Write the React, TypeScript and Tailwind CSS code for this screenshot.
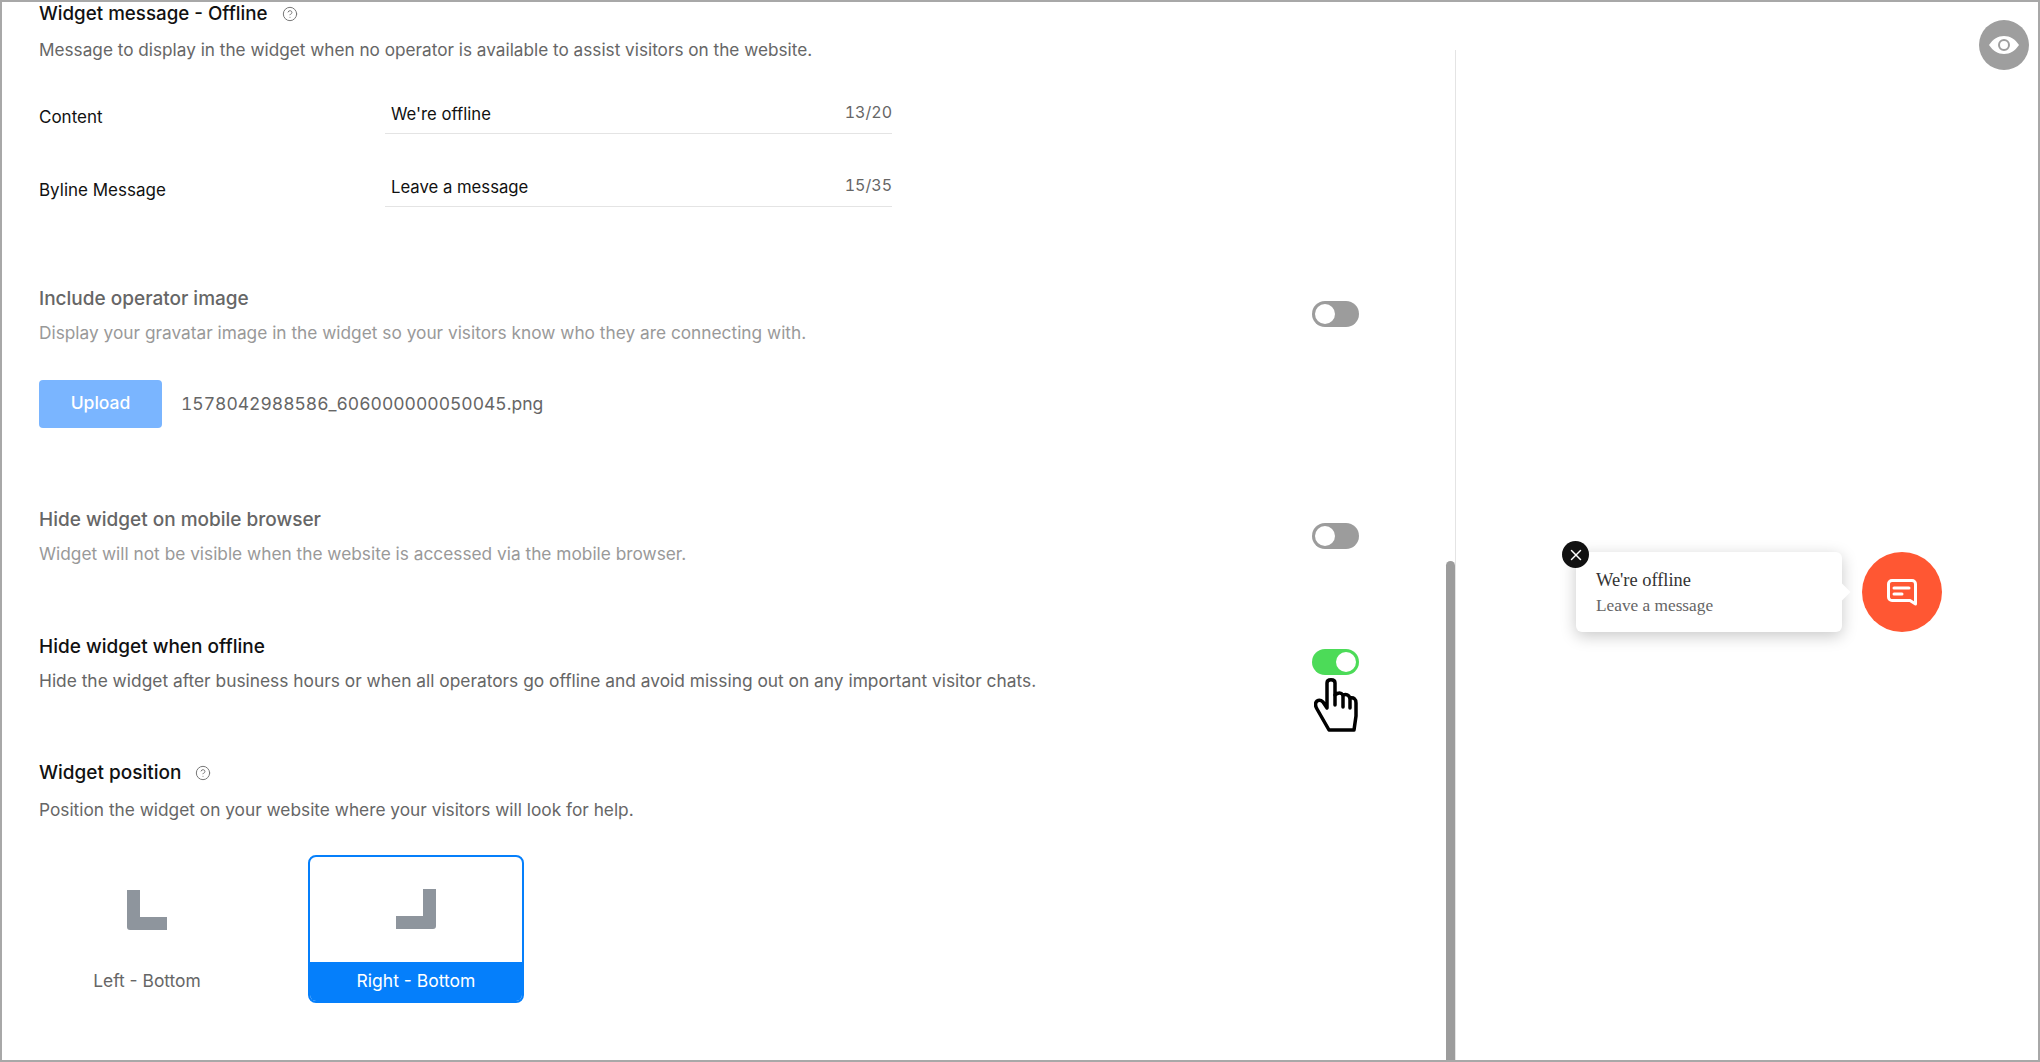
import React from 'react';
import { CircleHelp, X } from 'lucide-react';

const FONT = 'font-["Inter",sans-serif]';

const Toggle: React.FC<{ on?: boolean; className?: string }> = ({ on, className }) => (
  <div
    className={`flex h-[26px] w-[47px] shrink-0 items-center rounded-full px-[3px] ${
      on ? 'justify-end bg-[#4cdb58]' : 'justify-start bg-[#9c9c9c]'
    } ${className ?? ''}`}
  >
    <div className="h-[20px] w-[20px] rounded-full bg-white" />
  </div>
);

const Field: React.FC<{ label: string; value: string; count: string; className?: string }> = ({
  label,
  value,
  count,
  className,
}) => (
  <div className={`flex items-start ${className ?? ''}`}>
    <div className="w-[346px] pt-[13px] text-[17px] leading-[24px] text-[#111]">{label}</div>
    <div className="flex h-[42px] w-[507px] items-start justify-between border-b border-[#e4e4e4] pl-[6px] pt-[10px] leading-[24px]">
      <span className="text-[16.7px] text-[#111]">{value}</span>
      <span className="-mt-[2px] text-[16px] text-[#666] tabular-nums">{count}</span>
    </div>
  </div>
);

const CornerIcon: React.FC<{ side: 'left' | 'right' }> = ({ side }) => (
  <svg width="40" height="40" viewBox="0 0 40 40" fill="#8e959d">
    {side === 'left' ? (
      <path d="M0 0H13V27H40V40H3a3 3 0 0 1-3-3Z" />
    ) : (
      <path d="M27 0H40V37a3 3 0 0 1-3 3H0V27H27Z" />
    )}
  </svg>
);

export default function App() {
  return (
    <div
      className={`relative flex h-[1062px] w-[2040px] overflow-hidden border-2 border-[#a8a8a8] bg-white ${FONT}`}
    >
      {/* settings column */}
      <div className="w-[1453px] shrink-0 pl-[37px]">
        <div className="flex h-[24px] items-center gap-[14px] text-[18.75px] font-medium leading-[24px] text-[#111]">
          Widget message - Offline
          <CircleHelp className="h-[16px] w-[16px] text-[#777]" strokeWidth={1.5} />
        </div>
        <p className="mt-[12px] text-[17.2px] leading-[24px] text-[#666]">
          Message to display in the widget when no operator is available to assist visitors on the website.
        </p>

        <Field className="mt-[30px]" label="Content" value="We're offline" count="13/20" />
        <Field className="mt-[31px]" label="Byline Message" value="Leave a message" count="15/35" />

        <div className="mt-[79px] flex w-[1320px] items-start justify-between">
          <div>
            <h3 className="pt-[1px] text-[19px] font-medium leading-[24px] text-[#666]">Include operator image</h3>
            <p className="mt-[10px] text-[17.3px] leading-[24px] text-[#999]">
              Display your gravatar image in the widget so your visitors know who they are connecting with.
            </p>
          </div>
          <Toggle className="mt-[15px]" />
        </div>

        <div className="mt-[35px] flex items-center gap-[19px]">
          <button className="h-[48px] w-[123px] rounded-[4px] bg-[#7ab5ff] pb-[2px] text-[17.5px] font-medium text-white">
            Upload
          </button>
          <span className="text-[17.5px] text-[#666] tabular-nums">1578042988586_606000000050045.png</span>
        </div>

        <div className="mt-[79px] flex w-[1320px] items-start justify-between">
          <div>
            <h3 className="pt-[1px] text-[19px] font-medium leading-[24px] text-[#666]">Hide widget on mobile browser</h3>
            <p className="mt-[10px] text-[17.3px] leading-[24px] text-[#999]">
              Widget will not be visible when the website is accessed via the mobile browser.
            </p>
          </div>
          <Toggle className="mt-[16px]" />
        </div>

        <div className="mt-[68px] flex w-[1320px] items-start justify-between">
          <div>
            <h3 className="pt-[1px] text-[19px] font-medium leading-[24px] text-[#111]">Hide widget when offline</h3>
            <p className="mt-[10px] text-[17.35px] leading-[24px] text-[#666]">
              Hide the widget after business hours or when all operators go offline and avoid missing out on any
              important visitor chats.
            </p>
          </div>
          <Toggle on className="mt-[15px]" />
        </div>

        <div className="mt-[68px] flex h-[24px] items-center gap-[14px] text-[19px] font-medium leading-[24px] text-[#111]">
          Widget position
          <CircleHelp className="h-[16px] w-[16px] text-[#777]" strokeWidth={1.5} />
        </div>
        <p className="mt-[13px] text-[17.3px] leading-[24px] text-[#666]">
          Position the widget on your website where your visitors will look for help.
        </p>

        <div className="mt-[33px] flex gap-[53px]">
          <div className="flex h-[148px] w-[216px] flex-col items-center">
            <div className="flex h-[106px] items-center pt-[4px]">
              <CornerIcon side="left" />
            </div>
            <div className="flex h-[40px] items-center text-[17.4px] text-[#666]">Left - Bottom</div>
          </div>
          <div className="flex h-[148px] w-[216px] flex-col items-center overflow-hidden rounded-[8px] border-2 border-[#057ffb]">
            <div className="flex h-[106px] items-center">
              <CornerIcon side="right" />
            </div>
            <div className="flex h-[40px] w-full items-center justify-center bg-[#057ffb] text-[17.5px] text-white">
              Right - Bottom
            </div>
          </div>
        </div>
      </div>

      {/* widget preview */}
      <div className="relative mt-[48px] grow border-l border-[#e4e4e4]">
        <div className="ml-[120px] mt-[502px] flex items-start gap-[20px] font-['Liberation_Serif',serif]">
          <div className="relative h-[80px] w-[266px] rounded-[6px] bg-white pl-[20px] pt-[16px] shadow-[0_4px_16px_rgba(0,0,0,0.22)]">
            <div className="absolute -right-[6px] top-[34px] h-[12px] w-[12px] rotate-45 bg-white" />
            <div className="absolute -left-[14px] -top-[11px] flex h-[27px] w-[27px] items-center justify-center rounded-full bg-[#111]">
              <X className="h-[18px] w-[18px] text-white" strokeWidth={2} />
            </div>
            <div className="relative text-[18.4px] leading-[24px] text-[#333]">We're offline</div>
            <div className="relative mt-[2px] text-[17.3px] leading-[24px] text-[#666]">Leave a message</div>
          </div>
          <div className="flex h-[80px] w-[80px] items-center justify-center rounded-full bg-[#ff5733]">
            <svg width="30" height="27" viewBox="0 0 30 27" fill="none" stroke="white" strokeWidth="3">
              <path d="M5 1.5H25a3.5 3.5 0 0 1 3.5 3.5V25L23 21.5H5A3.5 3.5 0 0 1 1.5 18V5A3.5 3.5 0 0 1 5 1.5Z" strokeLinejoin="round" />
              <path d="M7 9H22M7 15H15" strokeLinecap="round" />
            </svg>
          </div>
        </div>
      </div>

      {/* overlays */}
      <div className="absolute left-[1444px] top-[559px] bottom-0 w-[9px] rounded-t-full bg-[#9c9c9c]" />
      <div className="absolute left-[1977px] top-[18px] flex h-[50px] w-[50px] items-center justify-center rounded-full bg-[#9e9e9e]">
        <svg width="30" height="18" viewBox="0 0 30 18">
          <path d="M0 9C4 3 9 0 15 0s11 3 15 9c-4 6-9 9-15 9S4 15 0 9Z" fill="white" />
          <circle cx="15" cy="9" r="5" fill="white" stroke="#9e9e9e" strokeWidth="2" />
        </svg>
      </div>
      <svg
        className="absolute left-[1312px] top-[676px]"
        width="44"
        height="54"
        viewBox="0 0 44 54"
        fill="white"
        stroke="black"
        strokeWidth="3.5"
        strokeLinejoin="round"
        strokeLinecap="round"
      >
        <path d="M13 30V5Q13 1.75 17 1.75T21 5V17Q26 13 29 17Q34 15 36 20Q42 19 42 25V38L40 52H15L3 31Q0 26 3 23Q6 21 9 24Z" />
        <path d="M21 17V27M29 17V29M36 20V30" fill="none" />
      </svg>
    </div>
  );
}
